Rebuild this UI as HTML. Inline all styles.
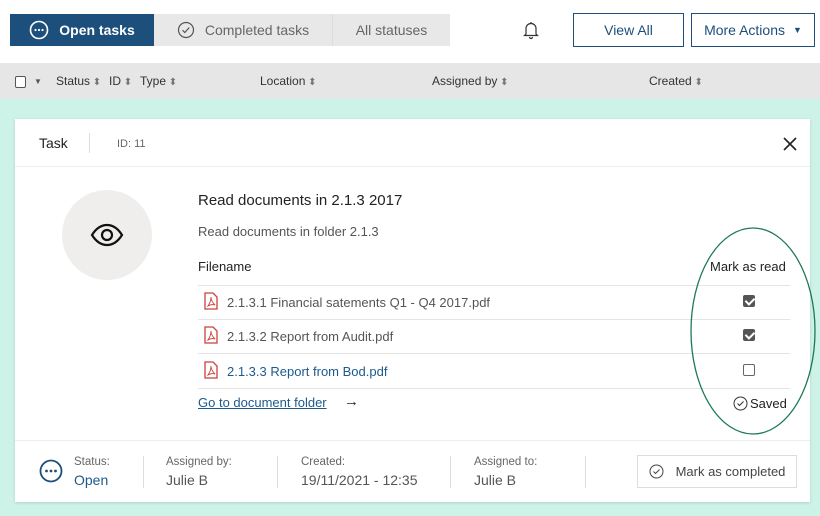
<!DOCTYPE html>
<html><head><style>
*{margin:0;padding:0;box-sizing:border-box}
body{width:820px;height:516px;overflow:hidden;background:#fff;font-family:"Liberation Sans",sans-serif;position:relative;color:#333}
.a{position:absolute;white-space:nowrap}
.tab{position:absolute;top:14px;height:32px;display:flex;align-items:center;justify-content:center;font-size:14px}
.btn{position:absolute;top:13px;height:34px;border:1px solid #1d4f7c;color:#1d4f7c;font-size:14px;display:flex;align-items:center;justify-content:center;background:#fff}
.hd{position:absolute;top:74px;font-size:12px;color:#333}
.hd:after{content:" \2B0D";font-size:10px;color:#777}
.ln{position:absolute;left:198px;width:592px;height:1px;background:#e4e4e4}
.pdf{position:absolute;left:204px;width:14px;height:18px}
.cb{position:absolute;left:743px;width:12px;height:12px;border:1px solid #666;border-radius:2px;background:#fff}
.cb.on{background:#555;border-color:#555}
.cb.on:after{content:"";position:absolute;left:3px;top:0px;width:4px;height:7px;border:solid #fff;border-width:0 2px 2px 0;transform:rotate(45deg)}
.dv{position:absolute;top:456px;width:1px;height:32px;background:#ddd}
.lb{position:absolute;top:456px;font-size:11.5px;color:#666}
.vl{position:absolute;top:472px;font-size:14px;color:#555}
</style></head><body>
<div class="tab" style="left:10px;width:144px;background:#1d4f7c;color:#fff;font-weight:bold">
<svg width="20" height="20" style="margin-right:10px" viewBox="0 0 20 20"><circle cx="10" cy="10" r="8.5" fill="none" stroke="#fff" stroke-width="1.6"/><circle cx="6.5" cy="10" r="1.1" fill="#fff"/><circle cx="10" cy="10" r="1.1" fill="#fff"/><circle cx="13.5" cy="10" r="1.1" fill="#fff"/></svg>Open tasks</div>
<div class="tab" style="left:154px;width:179px;background:#e8e8e8;color:#666;border-right:1px solid #ddd">
<svg width="18" height="18" style="margin-right:10px" viewBox="0 0 18 18"><circle cx="9" cy="9" r="7.5" fill="none" stroke="#555" stroke-width="1.2"/><path d="M5.5 9.2l2.3 2.3 4.5-5" fill="none" stroke="#555" stroke-width="1.2"/></svg>Completed tasks</div>
<div class="tab" style="left:333px;width:117px;background:#e8e8e8;color:#666">All statuses</div>
<svg class="a" style="left:522px;top:20px" width="18" height="20" viewBox="0 0 18 20"><path d="M4 14V8.5a5 5 0 0110 0V14l1.5 1.5h-13z M7.5 17a1.5 1.5 0 003 0" fill="none" stroke="#333" stroke-width="1.2"/><path d="M9 2v1.5" stroke="#333" stroke-width="1.2"/></svg>
<div class="btn" style="left:573px;width:111px">View All</div>
<div class="btn" style="left:691px;width:124px">More Actions <span style="font-size:9px;margin-left:8px">&#9660;</span></div>
<div class="a" style="left:0;top:63px;width:820px;height:36px;background:#e6e6e6"></div>
<div class="a" style="left:15px;top:76px;width:11px;height:12px;border:1px solid #555;border-radius:2px;background:#fff"></div>
<div class="a" style="left:34px;top:77px;font-size:8px;color:#555">&#9660;</div>
<div class="hd" style="left:56px">Status</div>
<div class="hd" style="left:109px">ID</div>
<div class="hd" style="left:140px">Type</div>
<div class="hd" style="left:260px">Location</div>
<div class="hd" style="left:432px">Assigned by</div>
<div class="hd" style="left:649px">Created</div>
<div class="a" style="left:0;top:99px;width:820px;height:417px;background:#cdf3e9"></div>
<div class="a" style="left:15px;top:119px;width:795px;height:383px;background:#fff;box-shadow:0 1px 3px rgba(0,0,0,.15)"></div>
<div class="a" style="left:39px;top:135px;font-size:14px;color:#222">Task</div>
<div class="a" style="left:89px;top:133px;width:1px;height:20px;background:#ddd"></div>
<div class="a" style="left:117px;top:138px;font-size:11px;color:#666">ID: 11</div>
<svg class="a" style="left:783px;top:137px" width="14" height="14"><path d="M1 1l12 12M13 1L1 13" stroke="#222" stroke-width="1.6"/></svg>
<div class="a" style="left:15px;top:166px;width:795px;height:1px;background:#eee"></div>
<div class="a" style="left:62px;top:190px;width:90px;height:90px;border-radius:50%;background:#f0eeec"></div>
<svg class="a" style="left:90px;top:223px" width="34" height="24" viewBox="0 0 34 24"><path d="M2 12C7 4 12 2 17 2s10 2 15 10c-5 8-10 10-15 10S7 20 2 12z" fill="none" stroke="#111" stroke-width="2.2"/><circle cx="17" cy="12" r="5" fill="none" stroke="#111" stroke-width="2.2"/></svg>
<div class="a" style="left:198px;top:192px;font-size:15px;color:#222">Read documents in 2.1.3 2017</div>
<div class="a" style="left:198px;top:224px;font-size:13px;color:#555">Read documents in folder 2.1.3</div>
<div class="a" style="left:198px;top:259px;font-size:13px;color:#222">Filename</div>
<div class="a" style="left:710px;top:259px;font-size:13px;color:#222">Mark as read</div>
<div class="ln" style="top:285px"></div>
<div class="ln" style="top:319px"></div>
<div class="ln" style="top:353px"></div>
<div class="ln" style="top:388px"></div>
<svg class="pdf" style="top:292px" viewBox="0 0 14 18"><path d="M1 1h8l4 4v12H1z" fill="none" stroke="#c9403f" stroke-width="1.3"/><path d="M4 14c2-3 3-6 3-9 0 3 2 6 4 8-3-1-5 0-7 1z" fill="none" stroke="#c9403f" stroke-width="0.9"/></svg>
<svg class="pdf" style="top:326px" viewBox="0 0 14 18"><path d="M1 1h8l4 4v12H1z" fill="none" stroke="#c9403f" stroke-width="1.3"/><path d="M4 14c2-3 3-6 3-9 0 3 2 6 4 8-3-1-5 0-7 1z" fill="none" stroke="#c9403f" stroke-width="0.9"/></svg>
<svg class="pdf" style="top:361px" viewBox="0 0 14 18"><path d="M1 1h8l4 4v12H1z" fill="none" stroke="#c9403f" stroke-width="1.3"/><path d="M4 14c2-3 3-6 3-9 0 3 2 6 4 8-3-1-5 0-7 1z" fill="none" stroke="#c9403f" stroke-width="0.9"/></svg>
<div class="a" style="left:227px;top:295px;font-size:13px;color:#555">2.1.3.1 Financial satements Q1 - Q4 2017.pdf</div>
<div class="a" style="left:227px;top:329px;font-size:13px;color:#555">2.1.3.2 Report from Audit.pdf</div>
<div class="a" style="left:227px;top:364px;font-size:13px;color:#1d5a8c">2.1.3.3 Report from Bod.pdf</div>
<div class="cb on" style="top:295px"></div>
<div class="cb on" style="top:329px"></div>
<div class="cb" style="top:364px"></div>
<div class="a" style="left:198px;top:395px;font-size:13px;color:#1d5a8c;text-decoration:underline">Go to document folder</div>
<div class="a" style="left:344px;top:393px;font-size:15px;color:#222">&#8594;</div>
<svg class="a" style="left:733px;top:396px" width="15" height="15"><circle cx="7.5" cy="7.5" r="6.5" fill="none" stroke="#333"/><path d="M4.5 7.5l2 2 4-4" fill="none" stroke="#333"/></svg>
<div class="a" style="left:750px;top:396px;font-size:13px;color:#222">Saved</div>
<svg class="a" style="left:688px;top:226px" width="130" height="212"><ellipse cx="65" cy="105" rx="62" ry="103" fill="none" stroke="#1e7a52" stroke-width="1.3"/></svg>
<div class="a" style="left:15px;top:440px;width:795px;height:1px;background:#eee"></div>
<svg class="a" style="left:39px;top:459px" width="24" height="24"><circle cx="12" cy="12" r="10.5" fill="none" stroke="#1d4f7c" stroke-width="1.8"/><circle cx="7.5" cy="12" r="1.4" fill="#1d4f7c"/><circle cx="12" cy="12" r="1.4" fill="#1d4f7c"/><circle cx="16.5" cy="12" r="1.4" fill="#1d4f7c"/></svg>
<div class="lb" style="left:74px">Status:</div><div class="vl" style="left:74px;color:#1d5a8c">Open</div>
<div class="dv" style="left:143px"></div>
<div class="lb" style="left:166px">Assigned by:</div><div class="vl" style="left:166px">Julie B</div>
<div class="dv" style="left:277px"></div>
<div class="lb" style="left:301px">Created:</div><div class="vl" style="left:301px">19/11/2021 - 12:35</div>
<div class="dv" style="left:450px"></div>
<div class="lb" style="left:474px">Assigned to:</div><div class="vl" style="left:474px">Julie B</div>
<div class="dv" style="left:585px"></div>
<div class="a" style="left:637px;top:455px;width:160px;height:33px;border:1px solid #ddd;display:flex;align-items:center;justify-content:center;font-size:13px;color:#444">
<svg width="15" height="15" style="margin-right:12px"><circle cx="7.5" cy="7.5" r="6.5" fill="none" stroke="#444"/><path d="M4.5 7.5l2 2 4-4" fill="none" stroke="#444"/></svg>Mark as completed</div>
</body></html>
